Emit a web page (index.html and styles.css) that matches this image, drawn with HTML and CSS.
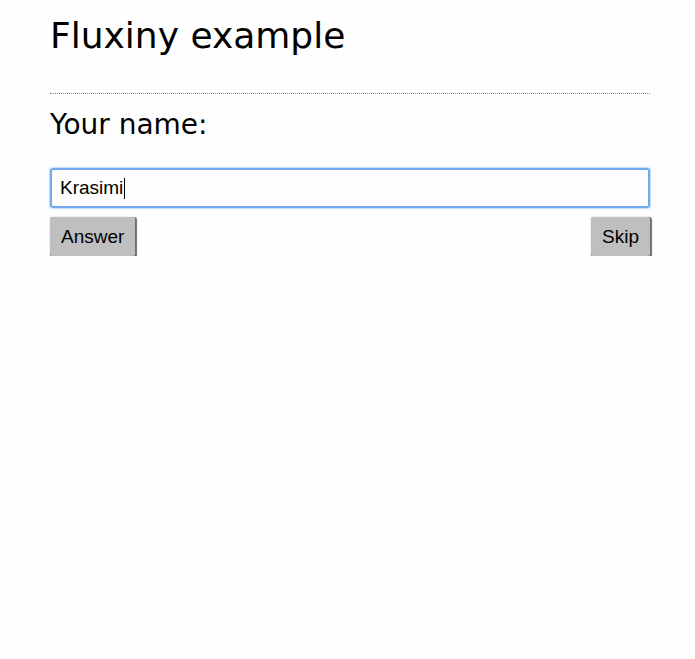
FILE: index.html
```html
<!DOCTYPE html>
<html>
<head>
<meta charset="utf-8">
<link rel="stylesheet" href="styles.css">
</head>
<body>
<div class="page">
  <h1 class="title">Fluxiny example</h1>
  <hr class="rule">
  <h2 class="label">Your name:</h2>
  <div class="field"><span class="value">Krasimi</span><span class="caret"></span></div>
  <div class="actions">
    <button class="btn">Answer</button>
    <button class="btn">Skip</button>
  </div>
</div>
</body>
</html>
```
FILE: styles.css
```css
html, body { margin: 0; padding: 0; background: #fefefe; }
body { font-family: "DejaVu Sans", Verdana, sans-serif; color: #000; }
.page { width: 600px; margin: 0 0 0 50px; padding-top: 14px; }
.title { font-size: 36px; font-weight: normal; margin: 0; line-height: 44px; }
.rule { border: 0; border-top: 1px dotted #888; margin: 35px 0 0; height: 0; }
.label { font-size: 28px; font-weight: normal; margin: 14px 0 0; line-height: 34px; }
.field { box-sizing: border-box; height: 40px; margin-top: 26px; border: 2px solid #74a8f0; border-radius: 3px; box-shadow: 0 0 1px 1px #c4dcfa; padding: 0 8px; display: flex; align-items: center; font-family: "Liberation Sans", Arial, sans-serif; font-size: 19px; }
.caret { width: 1px; height: 21px; background: #000; margin-left: 1px; }
.actions { display: flex; justify-content: space-between; margin-top: 9px; }
.btn { font-family: "Liberation Sans", Arial, sans-serif; font-size: 19px; background: #bfbfbf; border: 0; border-radius: 2px; box-shadow: 1px 1px 1px 1px #6e6e6e; height: 39px; padding: 0 11px; color: #000; }
```
